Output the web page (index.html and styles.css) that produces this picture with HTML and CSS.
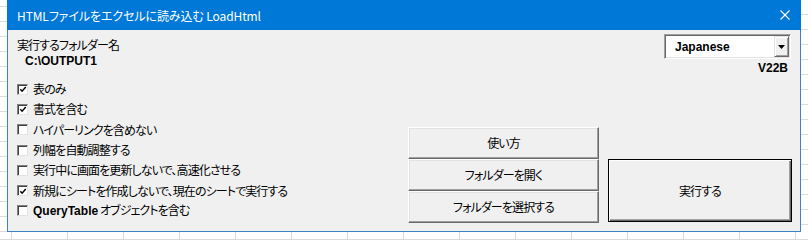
FILE: index.html
```html
<!DOCTYPE html>
<html lang="ja">
<head>
<meta charset="utf-8">
<title>LoadHtml</title>
<link rel="stylesheet" href="styles.css">
</head>
<body>
<div class="sheet">
  <div class="strip-left"></div>
  <div class="dialog">
    <div class="titlebar">
      <span class="title">HTMLファイルをエクセルに読み込む LoadHtml</span>
      <svg class="close" width="10" height="10" viewBox="0 0 10 10"><path d="M0.5 0.5 L9.5 9.5 M9.5 0.5 L0.5 9.5" stroke="#fff" stroke-width="1.1" fill="none"/></svg>
    </div>
    <div class="dlg-body">
      <div class="col-left">
        <div class="folder-label">実行するフォルダー名</div>
        <div class="folder-path">C:\OUTPUT1</div>
        <ul class="checks">
          <li class="check"><span class="box"><svg class="tick" width="9" height="9" viewBox="0 0 9 9"><path d="M1.5 4.2 L3.5 6.4 L7.6 1.8" stroke="#000" stroke-width="1.7" fill="none"/></svg></span><span class="label">表のみ</span></li>
          <li class="check"><span class="box"><svg class="tick" width="9" height="9" viewBox="0 0 9 9"><path d="M1.5 4.2 L3.5 6.4 L7.6 1.8" stroke="#000" stroke-width="1.7" fill="none"/></svg></span><span class="label">書式を含む</span></li>
          <li class="check"><span class="box"></span><span class="label">ハイパーリンクを含めない</span></li>
          <li class="check"><span class="box"></span><span class="label">列幅を自動調整する</span></li>
          <li class="check"><span class="box"></span><span class="label">実行中に画面を更新しないで、高速化させる</span></li>
          <li class="check"><span class="box"><svg class="tick" width="9" height="9" viewBox="0 0 9 9"><path d="M1.5 4.2 L3.5 6.4 L7.6 1.8" stroke="#000" stroke-width="1.7" fill="none"/></svg></span><span class="label">新規にシートを作成しないで、現在のシートで実行する</span></li>
          <li class="check"><span class="box"></span><span class="label"><b class="latin">QueryTable</b> オブジェクトを含む</span></li>
        </ul>
      </div>
      <div class="col-mid">
        <div class="btn">使い方</div>
        <div class="btn">フォルダーを開く</div>
        <div class="btn">フォルダーを選択する</div>
      </div>
      <div class="col-right">
        <div class="combo">
          <span class="combo-text">Japanese</span>
          <span class="combo-btn"><svg width="7" height="4" viewBox="0 0 7 4"><path d="M0 0 H7 L3.5 4 Z" fill="#000"/></svg></span>
        </div>
        <div class="version">V22B</div>
        <div class="btn btn-run">実行する</div>
      </div>
    </div>
  </div>
</div>
</body>
</html>
```

FILE: styles.css
```css
html, body {
  margin: 0;
  padding: 0;
}

body {
  width: 808px;
  height: 240px;
  overflow: hidden;
  background: #fff;
  font-family: "Liberation Sans", "Noto Sans CJK JP", sans-serif;
  font-size: 12px;
  color: #000;
}

.sheet {
  display: flex;
  width: 808px;
  height: 240px;
  overflow: hidden;
  background-color: #fff;
  background-image:
    linear-gradient(to bottom, #dadada 1px, transparent 1px),
    linear-gradient(to right, #dadada 1px, transparent 1px);
  background-size: 100% 15px, 56px 100%;
  background-position: 0 14px, 11px 0;
}

.strip-left {
  flex: 0 0 7px;
  height: 232px;
  background-color: #fff;
  background-image: linear-gradient(to bottom, #dadada 1px, transparent 1px);
  background-size: 100% 15px;
  background-position: 0 6px;
}

.dialog {
  flex: 0 0 794px;
  height: 232px;
  display: flex;
  flex-direction: column;
}

.titlebar {
  height: 30px;
  flex: 0 0 30px;
  background: #0078d7;
  color: #fff;
  display: flex;
  align-items: center;
  justify-content: space-between;
  padding: 0 11px 0 10px;
}

.title {
  font-family: "Noto Sans CJK JP", sans-serif;
  font-feature-settings: "palt";
  font-size: 12px;
  letter-spacing: -0.1px;
  line-height: 14px;
  margin-top: 1px;
}

.close {
  display: block;
}

.dlg-body {
  flex: 1;
  background: #f0f0f0;
  border: 1px solid #3f82c3;
  border-top: none;
  display: flex;
  padding: 4px 8px 0 9px;
}

.col-left {
  width: 391px;
  flex: 0 0 391px;
}

.folder-label,
.label,
.btn {
  font-family: "Noto Sans CJK JP", sans-serif;
  font-feature-settings: "palt";
  font-size: 12px;
  letter-spacing: -0.9px;
}

.folder-label {
  margin-top: 4px;
  line-height: 14px;
}

.folder-path {
  margin-top: 2px;
  padding-left: 8px;
  line-height: 14px;
  font-weight: bold;
}

.checks {
  list-style: none;
  margin: 11px 0 0 0;
  padding: 0;
}

.check {
  height: 20.3px;
  display: flex;
  align-items: center;
}

.box {
  width: 11px;
  height: 11px;
  box-sizing: border-box;
  background: #fff;
  border: 1px solid;
  border-color: #808080 #e3e3e3 #e3e3e3 #808080;
  box-shadow: inset 1px 1px 0 #404040;
  display: flex;
  align-items: center;
  justify-content: center;
  margin-right: 5px;
  flex: 0 0 11px;
}

.tick {
  display: block;
  margin: 1px 0 0 1px;
}

.label {
  line-height: 14px;
}

.latin {
  font-family: "Liberation Sans", sans-serif;
  font-weight: bold;
  font-size: 12px;
  letter-spacing: 0;
}

.col-mid {
  flex: 0 0 191px;
  width: 191px;
  padding-top: 93px;
  display: flex;
  flex-direction: column;
}

.btn {
  height: 32px;
  box-sizing: border-box;
  background: #f0f0f0;
  border: 1px solid;
  border-color: #fff #696969 #696969 #fff;
  box-shadow: inset -1px -1px 0 #a0a0a0, inset 1px 1px 0 #e3e3e3;
  display: flex;
  align-items: center;
  justify-content: center;
  line-height: 14px;
}

.col-right {
  flex: 0 0 184px;
  width: 184px;
  margin-left: 9px;
  display: flex;
  flex-direction: column;
  align-items: flex-end;
}

.combo {
  width: 127px;
  height: 25px;
  box-sizing: border-box;
  margin-right: 1px;
  background: #fff;
  border: 1px solid;
  border-color: #a0a0a0 #fff #fff #a0a0a0;
  box-shadow: inset 1px 1px 0 #696969, inset -1px -1px 0 #e3e3e3;
  display: flex;
  align-items: center;
  justify-content: space-between;
  padding: 0 1px 0 10px;
}

.combo-text {
  font-weight: bold;
  line-height: 14px;
}

.combo-btn {
  width: 15px;
  height: 21px;
  box-sizing: border-box;
  background: #f0f0f0;
  border: 1px solid;
  border-color: #e3e3e3 #696969 #696969 #e3e3e3;
  box-shadow: inset 1px 1px 0 #fff, inset -1px -1px 0 #a0a0a0;
  display: flex;
  align-items: center;
  justify-content: center;
}

.combo-btn svg {
  display: block;
}

.version {
  margin-top: 2px;
  margin-right: 4px;
  line-height: 14px;
  font-weight: bold;
}

.btn-run {
  width: 184px;
  height: 63px;
  margin-top: 84px;
  border: 1px solid #000;
  box-shadow: inset 1px 1px 0 #fff, inset -1px -1px 0 #696969, inset -2px -2px 0 #a0a0a0;
}
```
